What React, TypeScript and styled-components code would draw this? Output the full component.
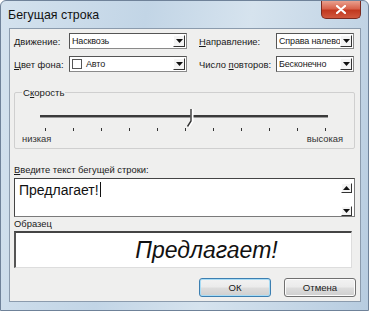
import styled, { createGlobalStyle } from 'styled-components';

const GlobalStyle = createGlobalStyle`
  html, body {
    margin: 0;
    padding: 0;
    background: #ffffff;
  }
  body {
    font-family: 'Liberation Sans', Arial, sans-serif;
  }
`;

const TICKS = Array.from({ length: 11 }, (_, i) => i);

function Arrow({ up }: { up?: boolean }) {
  return (
    <svg width="7" height="4" viewBox="0 0 7 4">
      <path d={up ? 'M0 4 L3.5 0 L7 4 Z' : 'M0 0 L7 0 L3.5 4 Z'} fill="#111" />
    </svg>
  );
}

type ComboProps = {
  width: number;
  value: string;
  swatch?: boolean;
};

function Combo({ width, value, swatch }: ComboProps) {
  return (
    <ComboBox style={{ width }}>
      {swatch && <Swatch />}
      <ComboText>{value}</ComboText>
      <DropButton>
        <Arrow />
      </DropButton>
    </ComboBox>
  );
}

export default function App() {
  return (
    <>
      <GlobalStyle />
      <Window>
        <TitleBar>
          <Title>Бегущая строка</Title>
          <CloseButton>
            <svg width="10" height="9" viewBox="0 0 10 9">
              <path d="M1 1 L9 8 M9 1 L1 8" stroke="#fff" strokeWidth="2.2" strokeLinecap="round" />
            </svg>
          </CloseButton>
        </TitleBar>
        <Client>
          <FieldRow>
            <Label width={55}>
              <u>Д</u>вижение:
            </Label>
            <Combo width={118} value="Насквозь" />
            <Label width={77} $gap={12}>
              <u>Н</u>аправление:
            </Label>
            <Combo width={78} value="Справа налево" />
          </FieldRow>
          <FieldRow>
            <Label width={55}>
              <u>Ц</u>вет фона:
            </Label>
            <Combo width={118} value="Авто" swatch />
            <Label width={77} $gap={12}>
              Число <u>п</u>овторов:
            </Label>
            <Combo width={78} value="Бесконечно" />
          </FieldRow>

          <GroupBox>
            <Legend>
              С<u>к</u>орость
            </Legend>
            <SliderArea>
              <Track />
              <Thumb>
                <svg width="8" height="20" viewBox="0 0 8 20">
                  <path d="M6 0 L6 12 L2 18" fill="none" stroke="#fff" strokeWidth="3" />
                  <path d="M5 0 L5 12 L1.5 17.5" fill="none" stroke="#333" strokeWidth="1.4" />
                </svg>
              </Thumb>
              <Ticks>
                {TICKS.map((t) => (
                  <Tick key={t} />
                ))}
              </Ticks>
              <Scale>
                <span>низкая</span>
                <span>высокая</span>
              </Scale>
            </SliderArea>
          </GroupBox>

          <SectionLabel $top={15} $bottom={3}>
            <u>В</u>ведите текст бегущей строки:
          </SectionLabel>
          <TextArea>
            <Entered>
              Предлагает!<Caret />
            </Entered>
            <ScrollColumn>
              <ScrollButton>
                <Arrow up />
              </ScrollButton>
              <ScrollButton>
                <Arrow />
              </ScrollButton>
            </ScrollColumn>
          </TextArea>

          <SectionLabel $top={1} $bottom={2}>
            Образец
          </SectionLabel>
          <Preview>Предлагает!</Preview>

          <Buttons>
            <Button $default>ОК</Button>
            <Button>Отмена</Button>
          </Buttons>
        </Client>
      </Window>
    </>
  );
}

const Window = styled.div`
  width: 369px;
  height: 311px;
  box-sizing: border-box;
  padding: 0 7px 8px 8px;
  display: flex;
  flex-direction: column;
  background: linear-gradient(100deg, #d4e2ee 0%, #c2d5e6 35%, #d6e3ee 60%, #b7cce0 100%);
  border: 1px solid #6f8299;
  border-radius: 6px 6px 0 0;
`;

const TitleBar = styled.div`
  height: 27px;
  display: flex;
  align-items: flex-start;
  justify-content: space-between;
`;

const Title = styled.div`
  font-size: 12.4px;
  color: #111;
  margin: 7px 0 0 -1px;
`;

const CloseButton = styled.div`
  width: 40px;
  height: 18px;
  box-sizing: border-box;
  display: flex;
  align-items: center;
  justify-content: center;
  border: 1px solid #7a2a20;
  border-top: none;
  border-radius: 0 0 5px 5px;
  background: linear-gradient(#e9a08e 0%, #d8634c 45%, #c1381f 55%, #d0583e 100%);
`;

const Client = styled.div`
  flex: 1;
  box-sizing: border-box;
  padding: 4px 4px 0 4px;
  background: #efefee;
  border: 1px solid #8b9bad;
  display: flex;
  flex-direction: column;
  font-size: 9.4px;
  color: #1a1a1a;
`;

const FieldRow = styled.div`
  display: flex;
  align-items: center;
  height: 16px;
  margin-bottom: 7px;
`;

const Label = styled.div<{ width: number; $gap?: number }>`
  width: ${({ width }) => width}px;
  margin-left: ${({ $gap }) => $gap ?? 0}px;
  white-space: nowrap;
`;

const ComboBox = styled.div`
  height: 16px;
  box-sizing: border-box;
  display: flex;
  align-items: center;
  background: #fff;
  border: 1px solid #8a8a8a;
  border-left-color: #555;
  border-top-color: #555;
  padding-left: 2px;
`;

const ComboText = styled.span`
  flex: 1;
  min-width: 0;
  white-space: nowrap;
  font-size: 9px;
  letter-spacing: -0.15px;
`;

const Swatch = styled.span`
  width: 10px;
  height: 10px;
  box-sizing: border-box;
  border: 1px solid #555;
  margin-right: 4px;
  background: #fff;
`;

const DropButton = styled.span`
  width: 12px;
  height: 12px;
  margin-right: 1px;
  flex-shrink: 0;
  box-sizing: border-box;
  display: flex;
  align-items: center;
  justify-content: center;
  background: #f4f4f4;
  border: 1px solid #fff;
  border-right-color: #333;
  border-bottom-color: #333;
`;

const GroupBox = styled.fieldset`
  margin: 8px 1px 0 0;
  padding: 0 8px 0 8px;
  border: 1px solid #cfcfcf;
  border-radius: 2px;
  min-width: 0;
`;

const Legend = styled.legend`
  padding: 0 1px;
  margin-left: -1px;
  font-size: 9.6px;
`;

const SliderArea = styled.div`
  position: relative;
  display: flex;
  flex-direction: column;
  padding: 17px 6px 0 6px;
`;

const Track = styled.div`
  height: 2px;
  margin: 0 12px 0 11px;
  background: #3a3a3a;
  border-bottom: 1px solid #9a9a9a;
`;

const Thumb = styled.div`
  position: absolute;
  left: 163px;
  top: 11px;
`;

const Ticks = styled.div`
  display: flex;
  justify-content: space-between;
  margin: 10px 14px 0 16px;
`;

const Tick = styled.span`
  width: 1px;
  height: 3px;
  background: #333;
`;

const Scale = styled.div`
  display: flex;
  justify-content: space-between;
  margin: 2px -3px 0 -7px;
  height: 15px;
  color: #333;
`;

const SectionLabel = styled.div<{ $top: number; $bottom: number }>`
  margin: ${({ $top, $bottom }) => `${$top}px 0 ${$bottom}px 0`};
`;

const TextArea = styled.div`
  height: 39px;
  margin-right: 1px;
  box-sizing: border-box;
  display: flex;
  background: #fff;
  border: 1px solid #7a7a7a;
  border-top-color: #444;
  border-left-color: #444;
`;

const Entered = styled.div`
  flex: 1;
  display: flex;
  align-items: flex-start;
  padding: 3px 0 0 4px;
  font-size: 14px;
  color: #111;
`;

const Caret = styled.span`
  width: 1px;
  height: 15px;
  margin-left: 1px;
  background: #111;
`;

const ScrollColumn = styled.div`
  width: 12px;
  display: flex;
  flex-direction: column;
  justify-content: space-between;
  padding: 4px 1px 0 0;
`;

const ScrollButton = styled.span`
  width: 11px;
  height: 10px;
  box-sizing: border-box;
  display: flex;
  align-items: center;
  justify-content: center;
  background: #f4f4f4;
  border: 1px solid #fff;
  border-right-color: #333;
  border-bottom-color: #333;
`;

const Preview = styled.div`
  height: 37px;
  margin: 0 4px 0 0;
  box-sizing: border-box;
  display: flex;
  align-items: center;
  justify-content: center;
  padding-left: 46px;
  background: #fff;
  border-top: 2px solid #444;
  border-left: 2px solid #555;
  border-right: 1px solid #ddd;
  border-bottom: 1px solid #ddd;
  font-size: 23px;
  font-style: italic;
  color: #111;
`;

const Buttons = styled.div`
  display: flex;
  justify-content: flex-end;
  gap: 13px;
  margin: 10px 0 0 0;
`;

const Button = styled.div<{ $default?: boolean }>`
  width: 72px;
  height: 19px;
  box-sizing: border-box;
  display: flex;
  align-items: center;
  justify-content: center;
  font-size: 9.6px;
  border: 1px solid ${({ $default }) => ($default ? '#3c7fb1' : '#707070')};
  border-radius: 3px;
  box-shadow: inset 0 0 0 1px ${({ $default }) => ($default ? '#a8dcf5' : '#fcfcfc')};
  background: linear-gradient(#f2f2f2 0%, #ebebeb 48%, #dddddd 52%, #cfcfcf 100%);
`;
